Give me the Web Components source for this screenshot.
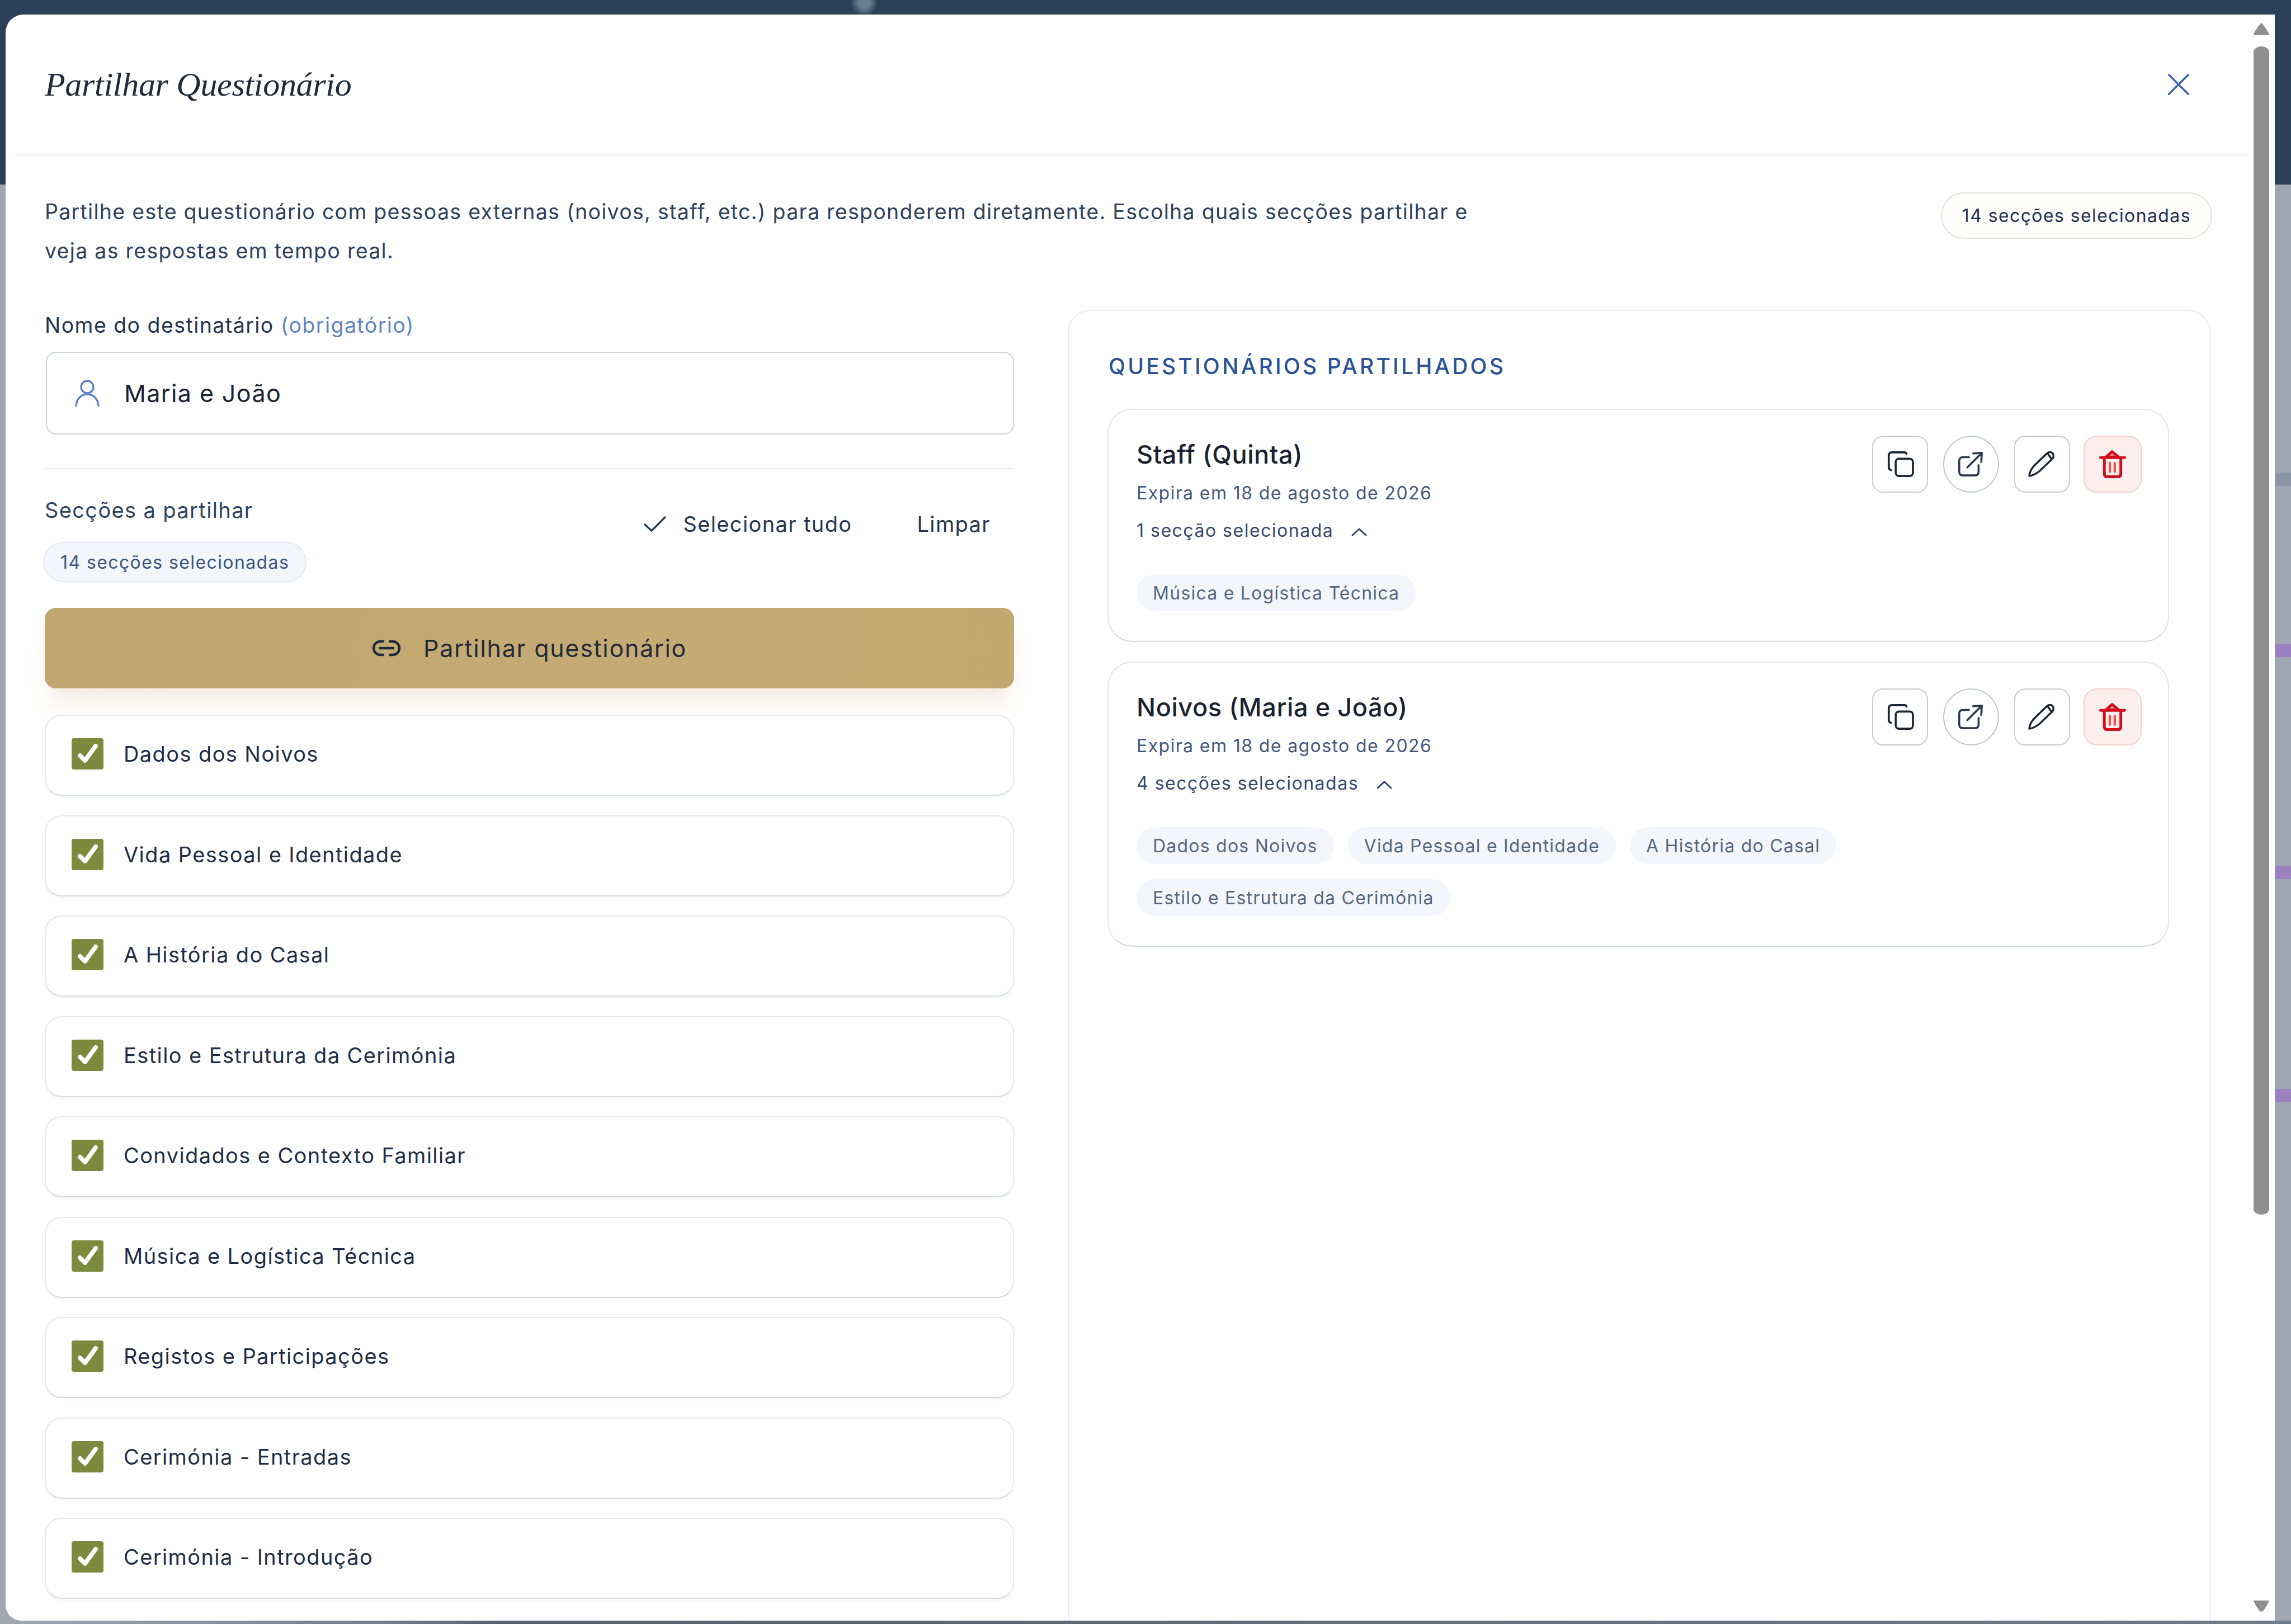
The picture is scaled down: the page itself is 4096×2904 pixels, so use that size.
<!DOCTYPE html>
<html lang="pt">
<head>
<meta charset="utf-8">
<title>Partilhar Questionário</title>
<style>
  html, body { margin: 0; padding: 0; background: #a0a7b3; }
</style>
</head>
<body>
<page-backdrop>
  <share-modal>
    <span slot="intro">Partilhe este questionário com pessoas externas (noivos, staff, etc.) para responderem diretamente. Escolha quais secções partilhar e veja as respostas em tempo real.</span>
    <share-form slot="left"></share-form>
    <shared-panel slot="right">
      <shared-card name="Staff (Quinta)" expires="Expira em 18 de agosto de 2026" count="1 secção selecionada">
        <tag-chip>Música e Logística Técnica</tag-chip>
      </shared-card>
      <shared-card name="Noivos (Maria e João)" expires="Expira em 18 de agosto de 2026" count="4 secções selecionadas">
        <tag-chip>Dados dos Noivos</tag-chip>
        <tag-chip>Vida Pessoal e Identidade</tag-chip>
        <tag-chip>A História do Casal</tag-chip>
        <tag-chip>Estilo e Estrutura da Cerimónia</tag-chip>
      </shared-card>
    </shared-panel>
  </share-modal>
</page-backdrop>

<script>
const ICONS = {
  copy: `<svg viewBox="0 0 100 100" fill="none" stroke="#1c2536" stroke-width="3.8" stroke-linecap="round" stroke-linejoin="round">
      <rect x="42" y="40" width="32" height="32" rx="6"/>
      <path d="M62 31Q62 28 58 28H35Q29 28 29 34V55Q29 60 33 61"/></svg>`,
  open: `<svg viewBox="0 0 100 100" fill="none" stroke="#2b3a52" stroke-width="3.8" stroke-linecap="round" stroke-linejoin="round">
      <path d="M46 37H35Q28 37 28 44V64Q28 71 35 71H57Q64 71 64 64V52"/>
      <path d="M43 56L70 29M54 30L70 29L69 46"/></svg>`,
  edit: `<svg viewBox="0 0 100 100" fill="none" stroke="#1c2536" stroke-width="3.6" stroke-linecap="round" stroke-linejoin="round">
      <path d="M26 72C27 63 31 58 36 52L59 30C63 26 70 27 71 33C72 36 70 39 68 41L45 63C39 68 33 71 26 72Z"/>
      <path d="M60 30C63 34 65 37 68 41"/></svg>`,
  trash: `<svg viewBox="0 0 100 100" fill="none" stroke="#d0101c" stroke-width="5" stroke-linecap="round" stroke-linejoin="round">
      <path d="M38 37L49 27L61 37Z" fill="#f2a0a0"/>
      <path d="M28 38H72"/>
      <path d="M35 40V68Q35 73 40 73H60Q65 73 65 68V40"/>
      <path d="M45 48V64M54 48V64" stroke="#e8574f" stroke-width="4.4"/></svg>`
};

class PageBackdrop extends HTMLElement {
  constructor() {
    super();
    this.attachShadow({ mode: 'open' }).innerHTML = `
      <style>
        :host {
          display: block;
          box-sizing: border-box;
          width: 4096px;
          height: 2904px;
          overflow: hidden;
          padding: 26px 29px 6px 10px;
          font-family: Inter, "Liberation Sans", sans-serif;
          color: #1f2d45;
          background:
            linear-gradient(#9b80c0, #9b80c0) 4068px 1151px / 28px 24px no-repeat,
            linear-gradient(#9b80c0, #9b80c0) 4068px 1548px / 28px 24px no-repeat,
            linear-gradient(#9b80c0, #9b80c0) 4068px 1947px / 28px 24px no-repeat,
            linear-gradient(#8a96a6, #8a96a6) 4068px 845px / 28px 24px no-repeat,
            linear-gradient(90deg, #a0a7b3 0, #737d8b 700px, #556072 900px, #6f7a8a 100%) 0 2898px / 100% 6px no-repeat,
            radial-gradient(circle 24px at 1545px 5px, #6b7e92 0, #6b7e92 40%, rgba(107,126,146,0) 100%) 0 0 / 100% 330px no-repeat,
            linear-gradient(#2c4059, #2c4059) 0 0 / 100% 330px no-repeat,
            #a0a7b3;
        }
      </style>
      <slot></slot>`;
  }
}

class ShareModal extends HTMLElement {
  constructor() {
    super();
    this.attachShadow({ mode: 'open' }).innerHTML = `
      <style>
        :host {
          display: flex;
          height: 2872px;
          background: #fff;
          border-radius: 32px 0 0 28px;
          overflow: hidden;
        }
        .main { flex: 1; min-width: 0; overflow: hidden; }
        .content { margin: 0 74px 0 70px; }
        .intro {
          display: flex;
          justify-content: space-between;
          align-items: flex-start;
          padding-top: 66px;
        }
        p {
          margin: 0;
          width: 2600px;
          font-size: 37.5px;
          line-height: 70px;
          letter-spacing: 1.28px;
          color: #2d405c;
        }
        .cols {
          display: grid;
          grid-template-columns: 1733px 2043px;
          column-gap: 96px;
          margin-top: 70px;
          align-items: start;
        }
      </style>
      <div class="main">
        <modal-header heading="Partilhar Questionário"></modal-header>
        <div class="content">
          <div class="intro">
            <p><slot name="intro"></slot></p>
            <count-pill>14 secções selecionadas</count-pill>
          </div>
          <div class="cols">
            <slot name="left"></slot>
            <slot name="right"></slot>
          </div>
        </div>
      </div>
      <modal-scrollbar></modal-scrollbar>`;
  }
}

class ModalHeader extends HTMLElement {
  connectedCallback() {
    if (this.shadowRoot) return;
    this.attachShadow({ mode: 'open' }).innerHTML = `
      <style>
        :host {
          display: flex;
          justify-content: space-between;
          align-items: center;
          box-sizing: border-box;
          height: 252px;
          margin: 0 9px 0 17px;
          padding: 0 106px 0 53px;
          border-bottom: 2px solid #eef0f2;
        }
        h1 {
          margin: 0;
          font-family: "Liberation Serif", serif;
          font-style: italic;
          font-weight: 400;
          font-size: 60px;
          letter-spacing: -0.3px;
          color: #1f2a3a;
        }
        svg { width: 38px; height: 38px; display: block; }
      </style>
      <h1>${this.getAttribute('heading')}</h1>
      <svg viewBox="0 0 38 38" fill="none" stroke="#3c66b0" stroke-width="3.4" stroke-linecap="round">
        <path d="M1 1L37 37M37 1L1 37"/>
      </svg>`;
  }
}

class CountPill extends HTMLElement {
  constructor() {
    super();
    this.attachShadow({ mode: 'open' }).innerHTML = `
      <style>
        :host {
          display: inline-flex;
          align-items: center;
          box-sizing: border-box;
          height: 83px;
          padding: 0 36px;
          border: 2px solid #e2dfda;
          border-radius: 42px;
          background: #fffefc;
          font-size: 32px;
          letter-spacing: 1.4px;
          color: #22304a;
          white-space: nowrap;
        }
        :host([soft]) {
          height: 72px;
          padding: 0 29px;
          border-color: #e4e9f2;
          background: #f3f6fb;
          color: #3b557f;
        }
      </style>
      <slot></slot>`;
  }
}

class RecipientField extends HTMLElement {
  constructor() {
    super();
    this.attachShadow({ mode: 'open' }).innerHTML = `
      <style>
        :host {
          display: flex;
          align-items: center;
          box-sizing: border-box;
          height: 148px;
          margin-left: 2px;
          padding: 0 50px;
          gap: 44px;
          border: 2px solid #cfd3d9;
          border-radius: 18px;
          font-size: 43px;
          letter-spacing: 1.4px;
          color: #1a2230;
        }
        svg { width: 44px; height: 48px; flex: none; }
      </style>
      <svg viewBox="0 0 44 48" fill="none" stroke="#5b82c4" stroke-width="3.4" stroke-linecap="round">
        <circle cx="22" cy="13" r="11"/>
        <path d="M2 47C3 33 12 26 22 26C32 26 41 33 42 47"/>
      </svg>
      <slot></slot>`;
  }
}

class SectionToggle extends HTMLElement {
  constructor() {
    super();
    this.attachShadow({ mode: 'open' }).innerHTML = `
      <style>
        :host {
          display: flex;
          align-items: center;
          box-sizing: border-box;
          height: 145px;
          padding: 0 46px 5px;
          gap: 36px;
          background: #fff;
          border: 2px solid #e6e8eb;
          border-bottom-color: #d8dbdf;
          border-radius: 30px;
          box-shadow: 0 3px 6px rgba(20, 30, 50, 0.04);
          font-size: 38px;
          letter-spacing: 1.4px;
          color: #1f2d45;
        }
        .box {
          width: 57px;
          height: 56px;
          flex: none;
          background: #7b8a3c;
          border-radius: 4px;
        }
        svg { display: block; width: 100%; height: 100%; }
      </style>
      <span class="box">
        <svg viewBox="0 0 57 56" fill="none" stroke="#fff" stroke-width="8" stroke-linecap="round" stroke-linejoin="round">
          <path d="M15 31L24 40L43 14"/>
        </svg>
      </span>
      <slot></slot>`;
  }
}

class ShareForm extends HTMLElement {
  constructor() {
    super();
    const sections = [
      'Dados dos Noivos', 'Vida Pessoal e Identidade', 'A História do Casal',
      'Estilo e Estrutura da Cerimónia', 'Convidados e Contexto Familiar',
      'Música e Logística Técnica', 'Registos e Participações',
      'Cerimónia - Entradas', 'Cerimónia - Introdução'
    ];
    this.attachShadow({ mode: 'open' }).innerHTML = `
      <style>
        :host { display: block; }
        .label {
          font-size: 37.5px;
          line-height: 56px;
          letter-spacing: 1.44px;
          color: #24344e;
          margin-bottom: 19px;
        }
        .label em { font-style: normal; color: #5f85bd; }
        .rule { height: 2px; margin: 60px 0 45px -2px; background: #e9ebee; }
        .bar {
          display: flex;
          justify-content: space-between;
          align-items: flex-start;
          padding-right: 42px;
        }
        .title {
          font-size: 38px;
          line-height: 56px;
          letter-spacing: 1.37px;
          color: #2d4463;
          margin-bottom: 29px;
        }
        count-pill { margin-left: -3px; }
        .actions {
          display: flex;
          align-items: center;
          gap: 116px;
          margin-top: 25px;
          font-size: 38px;
          line-height: 56px;
          color: #26364f;
        }
        .actions span { display: flex; align-items: center; gap: 30px; letter-spacing: 1.38px; }
        .actions svg { width: 40px; height: 28px; }
        .primary {
          display: flex;
          align-items: center;
          justify-content: center;
          gap: 40px;
          height: 144px;
          margin: 46px 0 47px;
          border-radius: 20px;
          background: linear-gradient(90deg, #c2a670, #c5aa74 60%, #c3a86f);
          box-shadow: 0 30px 40px -12px rgba(196, 168, 113, 0.26);
          font-size: 43px;
          letter-spacing: 1.7px;
          color: #1f2a3a;
        }
        .primary svg { width: 52px; height: 30px; }
        .list { display: grid; row-gap: 34.5px; }
      </style>
      <div class="label">Nome do destinatário <em>(obrigatório)</em></div>
      <recipient-field>Maria e João</recipient-field>
      <div class="rule"></div>
      <div class="bar">
        <div>
          <div class="title">Secções a partilhar</div>
          <count-pill soft>14 secções selecionadas</count-pill>
        </div>
        <div class="actions">
          <span>
            <svg viewBox="0 0 40 28" fill="none" stroke="#26364f" stroke-width="3.2" stroke-linecap="round" stroke-linejoin="round"><path d="M2 15L14 26L38 2"/></svg>
            Selecionar tudo
          </span>
          <span>Limpar</span>
        </div>
      </div>
      <div class="primary">
        <svg viewBox="0 0 52 30" fill="none" stroke="#1f2a3a" stroke-width="4.5" stroke-linecap="round">
          <path d="M20 3H15A12 12 0 0 0 15 27H20M32 3H37A12 12 0 0 1 37 27H32M14 15H38"/>
        </svg>
        Partilhar questionário
      </div>
      <div class="list">
        ${sections.map((s) => `<section-toggle>${s}</section-toggle>`).join('')}
      </div>`;
  }
}

class SharedPanel extends HTMLElement {
  constructor() {
    super();
    this.attachShadow({ mode: 'open' }).innerHTML = `
      <style>
        :host {
          display: block;
          box-sizing: border-box;
          min-height: 2420px;
          padding: 71px 72px 71px 69px;
          border: 2px solid #ebedf0;
          border-radius: 40px;
        }
        h2 {
          margin: 0 0 48px 2px;
          font-size: 39px;
          line-height: 56px;
          font-weight: 500;
          letter-spacing: 4.2px;
          color: #2a5298;
        }
        .cards { display: grid; row-gap: 35px; }
      </style>
      <h2>QUESTIONÁRIOS PARTILHADOS</h2>
      <div class="cards"><slot></slot></div>`;
  }
}

class SharedCard extends HTMLElement {
  connectedCallback() {
    if (this.shadowRoot) return;
    this.attachShadow({ mode: 'open' }).innerHTML = `
      <style>
        :host {
          display: block;
          box-sizing: border-box;
          padding: 46px 47px 53px 50px;
          background: #fff;
          border: 2px solid #e4e6e9;
          border-bottom-color: #d4d7db;
          border-radius: 44px;
        }
        .head { display: flex; justify-content: space-between; align-items: flex-start; }
        .name {
          padding-top: 2px;
          font-size: 45px;
          line-height: 64px;
          font-weight: 500;
          letter-spacing: 0.6px;
          color: #1a2230;
        }
        .expires {
          margin-top: 12px;
          font-size: 32px;
          line-height: 50px;
          letter-spacing: 1.4px;
          color: #44597a;
        }
        .count {
          display: flex;
          align-items: center;
          gap: 32px;
          margin-top: 17px;
          font-size: 32px;
          line-height: 50px;
          letter-spacing: 1.5px;
          color: #35496a;
        }
        .count svg { width: 28px; height: 16px; margin-top: 4px; }
        .actions { display: flex; gap: 27px; }
        icon-button[danger] { margin-left: -3px; }
        .tags { display: flex; flex-wrap: wrap; gap: 27px 25px; margin-top: 53px; }
      </style>
      <div class="head">
        <div>
          <div class="name">${this.getAttribute('name')}</div>
          <div class="expires">${this.getAttribute('expires')}</div>
          <div class="count">
            ${this.getAttribute('count')}
            <svg viewBox="0 0 28 16" fill="none" stroke="#2c3e5a" stroke-width="2.8" stroke-linecap="round" stroke-linejoin="round"><path d="M2 14L14 3L26 14"/></svg>
          </div>
        </div>
        <div class="actions">
          <icon-button kind="copy"></icon-button>
          <icon-button kind="open" round></icon-button>
          <icon-button kind="edit"></icon-button>
          <icon-button kind="trash" danger></icon-button>
        </div>
      </div>
      <div class="tags"><slot></slot></div>`;
  }
}

class IconButton extends HTMLElement {
  connectedCallback() {
    if (this.shadowRoot) return;
    this.attachShadow({ mode: 'open' }).innerHTML = `
      <style>
        :host {
          display: block;
          box-sizing: border-box;
          width: 100px;
          height: 102px;
          border: 2px solid #c9cbcf;
          border-radius: 20px;
          background: #fff;
          overflow: hidden;
        }
        :host([round]) { border-radius: 50%; border-color: #bfc3c9; }
        :host([danger]) { width: 104px; border-color: #f8cfcf; background: #fdeeee; border-radius: 24px; }
        svg { display: block; width: 100%; height: 100%; }
      </style>
      ${ICONS[this.getAttribute('kind')]}`;
  }
}

class TagChip extends HTMLElement {
  constructor() {
    super();
    this.attachShadow({ mode: 'open' }).innerHTML = `
      <style>
        :host {
          display: inline-flex;
          align-items: center;
          box-sizing: border-box;
          height: 66px;
          padding: 0 29px;
          border-radius: 33px;
          background: #f3f6fb;
          font-size: 32px;
          letter-spacing: 1.23px;
          color: #53667f;
          white-space: nowrap;
        }
      </style>
      <slot></slot>`;
  }
}

class ModalScrollbar extends HTMLElement {
  constructor() {
    super();
    this.attachShadow({ mode: 'open' }).innerHTML = `
      <style>
        :host {
          display: flex;
          flex-direction: column;
          flex: none;
          width: 28px;
          margin-right: 10px;
          padding: 15px 0 14px;
          box-sizing: border-box;
        }
        svg { display: block; width: 28px; height: 22px; flex: none; }
        .thumb {
          height: 2089px;
          margin-top: 20px;
          background: #8f8f8f;
          border-radius: 14px 14px 14px 14px / 10px 10px 10px 10px;
        }
        .down { margin-top: auto; }
      </style>
      <svg viewBox="0 0 28 22"><path d="M14 0C17 2 28 18 28 20Q28 22 26 22H2Q0 22 0 20C0 18 11 2 14 0Z" fill="#8f8f8f"/></svg>
      <div class="thumb"></div>
      <svg class="down" viewBox="0 0 28 22"><path d="M0 0H28C26 6 18 20 14 20C10 20 2 6 0 0Z" fill="#8f8f8f"/></svg>`;
  }
}

customElements.define('page-backdrop', PageBackdrop);
customElements.define('share-modal', ShareModal);
customElements.define('modal-header', ModalHeader);
customElements.define('count-pill', CountPill);
customElements.define('recipient-field', RecipientField);
customElements.define('section-toggle', SectionToggle);
customElements.define('share-form', ShareForm);
customElements.define('shared-panel', SharedPanel);
customElements.define('shared-card', SharedCard);
customElements.define('icon-button', IconButton);
customElements.define('tag-chip', TagChip);
customElements.define('modal-scrollbar', ModalScrollbar);
</script>
</body>
</html>
